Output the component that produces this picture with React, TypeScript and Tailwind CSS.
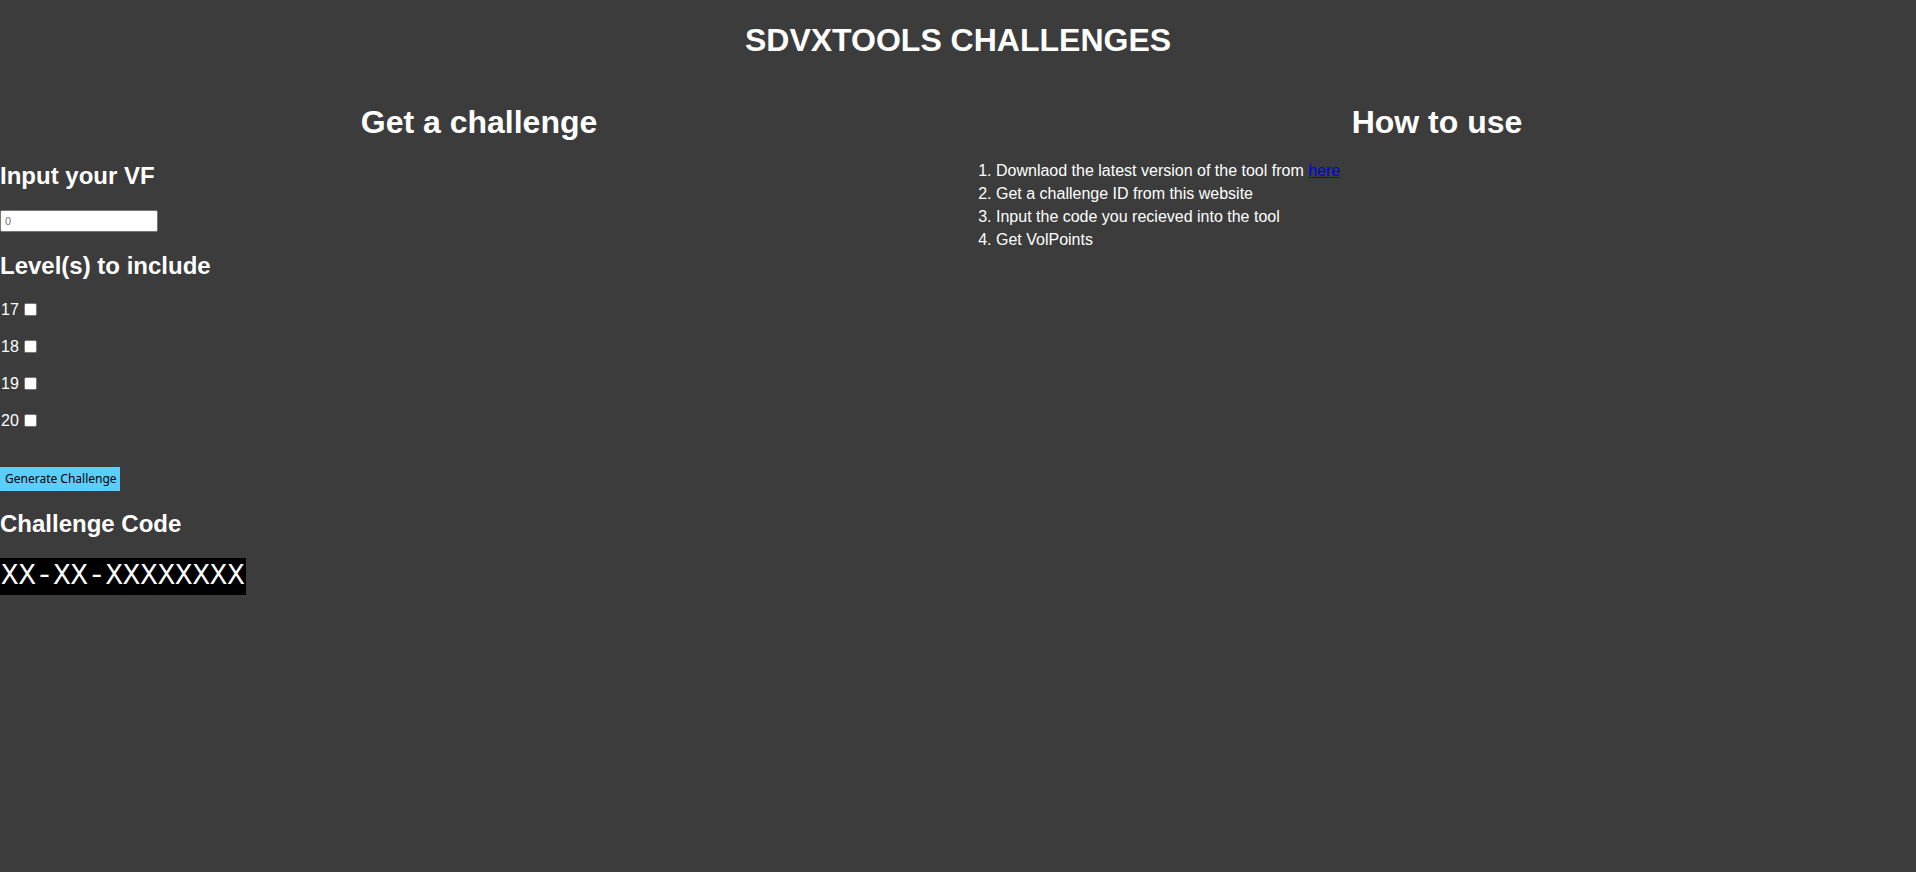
import React from "react";

const levels = ["17", "18", "19", "20"];
const steps: React.ReactNode[] = [
  <>
    Downlaod the latest version of the tool from{" "}
    <a href="#" className="text-[#0000ee] underline">
      here
    </a>
  </>,
  "Get a challenge ID from this website",
  "Input the code you recieved into the tool",
  "Get VolPoints",
];

export default function App() {
  return (
    <div
      className="min-h-[872px] w-full bg-[#3c3c3c] text-white"
      style={{ fontFamily: '"Liberation Sans", Arial, sans-serif' }}
    >
      <div className="pt-[22px]">
        <h1 className="text-center text-[32px] font-bold leading-[37px]">
          SDVXTOOLS CHALLENGES
        </h1>
      </div>
      <div className="mt-[45px] grid grid-cols-2">
        <div className="flex flex-col items-start">
          <h1 className="w-full text-center text-[32px] font-bold leading-[37px]">
            Get a challenge
          </h1>
          <h2 className="mt-[21px] text-[24px] font-bold leading-[28px]">
            Input your VF
          </h2>
          <input
            type="text"
            placeholder="0"
            className="mt-[20px] h-[22px] w-[158px] rounded-[2px] border border-[#767676] bg-white px-[4px] text-[11px] text-black placeholder:text-[#757575]"
          />
          <h2 className="mt-[20px] text-[24px] font-bold leading-[28px]">
            Level(s) to include
          </h2>
          <div className="mt-[19px] flex flex-col gap-[16px]">
            {levels.map((l) => (
              <label key={l} className="flex h-[21px] items-start text-[16px] leading-[21px]">
                <span className="pl-[1px]">{l}</span>
                <input
                  type="checkbox"
                  className="ml-[5px] mt-[4px] h-[13px] w-[13px] appearance-none rounded-[2px] border border-[#767676] bg-white"
                />
              </label>
            ))}
          </div>
          <button
            className="mt-[36px] h-[24px] w-[120px] whitespace-nowrap bg-[#5bcefa] pl-[5px] text-left text-[12px] text-black"
            style={{ fontFamily: '"Noto Sans", "Open Sans", sans-serif' }}
          >
            Generate Challenge
          </button>
          <h2 className="mt-[19px] text-[24px] font-bold leading-[28px]">
            Challenge Code
          </h2>
          <div
            className="mt-[20px] flex h-[37px] w-[246px] items-center bg-black pl-[1px] text-[29px] text-white"
            style={{ fontFamily: '"Liberation Mono", "DejaVu Sans Mono", monospace' }}
          >
            XX-XX-XXXXXXXX
          </div>
        </div>
        <div>
          <h1 className="text-center text-[32px] font-bold leading-[37px]">
            How to use
          </h1>
          <ol className="mt-[18px] list-decimal pl-[38px] text-[16px] leading-[23px]">
            {steps.map((s, i) => (
              <li key={i}>{s}</li>
            ))}
          </ol>
        </div>
      </div>
    </div>
  );
}
